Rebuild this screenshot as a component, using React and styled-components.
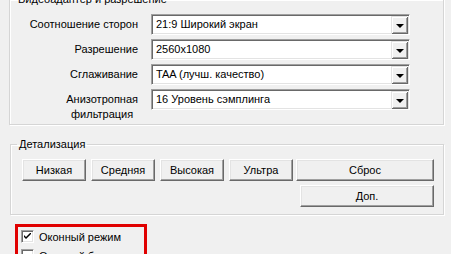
import React from "react";
import styled, {createGlobalStyle} from "styled-components";

const Global = createGlobalStyle`
html, body {
  margin: 0;
  padding: 0;
  background: #f0f0f0;
  overflow: hidden;
}
body {
  font-family: "Liberation Sans", Arial, sans-serif;
  font-size: 11px;
  color: #000;
}
`;

const S = {};
S.Page = styled.div`
width: 451px;
height: 254px;
display: flex;
flex-direction: column;
`;
S.Group = styled.fieldset`
margin: ${p => p.$top}px 0 0 ${p => p.$left}px;
width: ${p => p.$width}px;
box-sizing: border-box;
min-inline-size: 0;
padding: 8px 0 ${p => p.$bottom}px 0;
border: 1px solid #d5d5d5;
box-shadow: inset 1px 1px 0 #fff, 1px 1px 0 #fff;
`;
S.Legend = styled.legend`
margin-left: 6px;
padding: 0 2px;
font-size: 11px;
line-height: 13px;
`;
S.Form = styled.div`
display: grid;
grid-template-columns: 128px 259px;
column-gap: 13px;
row-gap: 4px;
align-items: center;
`;
S.Label = styled.div`
justify-self: end;
text-align: center;
line-height: 15px;
align-self: ${p => (p.$multi ? "start" : "center")};
padding-top: ${p => (p.$multi ? 3 : 0)}px;
`;
S.Combo = styled.div`
align-self: start;
display: flex;
height: 21px;
box-sizing: border-box;
background: #fff;
border: 1px solid;
border-color: #a0a0a0 #fff #fff #a0a0a0;
box-shadow: inset 1px 1px 0 #696969, inset -1px -1px 0 #e3e3e3;
padding: 1px;
`;
S.ComboText = styled.div`
flex: 1;
padding-left: 3px;
line-height: 17px;
white-space: nowrap;
overflow: hidden;
`;
S.Drop = styled.div`
width: 16px;
height: 17px;
box-sizing: border-box;
background: #f0f0f0;
border-top: 1px solid #e3e3e3;
border-left: 1px solid #e3e3e3;
box-shadow: inset 1px 1px 0 #fff, inset -1px -1px 0 #a0a0a0, 1px 1px 0 #696969;
display: flex;
align-items: center;
justify-content: center;
margin-right: 1px;
`;
S.Arrow = styled.div`
width: 0;
height: 0;
border-left: 4px solid transparent;
border-right: 4px solid transparent;
border-top: 4px solid #000;
margin-top: 1px;
`;
S.Buttons = styled.div`
display: grid;
grid-template-columns: 64px 64px 64px 64px 136px;
column-gap: 5px;
row-gap: 4px;
padding-left: 11px;
`;
S.Button = styled.div`
grid-column: ${p => p.$col || "auto"};
justify-self: ${p => (p.$end ? "end" : "stretch")};
width: ${p => (p.$width ? p.$width + "px" : "auto")};
margin-left: ${p => p.$shift || 0}px;
height: 22px;
box-sizing: border-box;
display: flex;
align-items: center;
justify-content: center;
background: #f0f0f0;
border: 1px solid;
border-color: #fff #696969 #696969 #fff;
box-shadow: inset -1px -1px 0 #a0a0a0, inset 1px 1px 0 #e3e3e3;
`;
S.Checks = styled.div`
margin: 9px 0 0 15px;
width: 132px;
box-sizing: border-box;
border: 3px solid #e00000;
border-bottom: none;
padding: 3px 0 0 3px;
display: flex;
flex-direction: column;
gap: 6px;
`;
S.CheckRow = styled.div`
display: flex;
align-items: center;
gap: 5px;
height: 13px;
`;
S.Box = styled.div`
width: 13px;
height: 13px;
box-sizing: border-box;
background: #fff;
border: 1px solid;
border-color: #a0a0a0 #fff #fff #a0a0a0;
box-shadow: inset 1px 1px 0 #696969, inset -1px -1px 0 #e3e3e3;
display: flex;
align-items: center;
justify-content: center;
`;

const Check = () => (
  <svg width="7" height="7" viewBox="0 0 7 7">
    <path d="M0 2 L0 4 L2 6 L7 1 L7 -1 L2 4 Z" fill="#000"/>
  </svg>
);

const rows = [
  {label: "Соотношение сторон", value: "21:9 Широкий экран"},
  {label: "Разрешение", value: "2560x1080"},
  {label: "Сглаживание", value: "TAA (лучш. качество)"},
  {label: <>Анизотропная<br/>фильтрация</>, value: "16 Уровень сэмплинга", multi: true},
];

const Combo = ({value}) => (
  <S.Combo>
    <S.ComboText>{value}</S.ComboText>
    <S.Drop><S.Arrow/></S.Drop>
  </S.Combo>
);

const CheckItem = ({checked, children}) => (
  <S.CheckRow>
    <S.Box>{checked && <Check/>}</S.Box>
    <span>{children}</span>
  </S.CheckRow>
);

export default function App() {
  return (
    <S.Page>
      <Global/>
      <S.Group $top={-7} $left={9} $width={435} $bottom={2}>
        <S.Legend>Видеоадаптер и разрешение</S.Legend>
        <S.Form>
          {rows.map((r, i) => (
            <React.Fragment key={i}>
              <S.Label $multi={r.multi}>{r.label}</S.Label>
              <Combo value={r.value}/>
            </React.Fragment>
          ))}
        </S.Form>
      </S.Group>
      <S.Group $top={13} $left={10} $width={434} $bottom={7}>
        <S.Legend>Детализация</S.Legend>
        <S.Buttons>
          <S.Button>Низкая</S.Button>
          <S.Button>Средняя</S.Button>
          <S.Button>Высокая</S.Button>
          <S.Button>Ультра</S.Button>
          <S.Button $shift={-2}>Сброс</S.Button>
          <S.Button $col={5} $end $width={134}>Доп.</S.Button>
        </S.Buttons>
      </S.Group>
      <S.Checks>
        <CheckItem checked>Оконный режим</CheckItem>
        <CheckItem>Оконный без рамки</CheckItem>
      </S.Checks>
    </S.Page>
  );
}
